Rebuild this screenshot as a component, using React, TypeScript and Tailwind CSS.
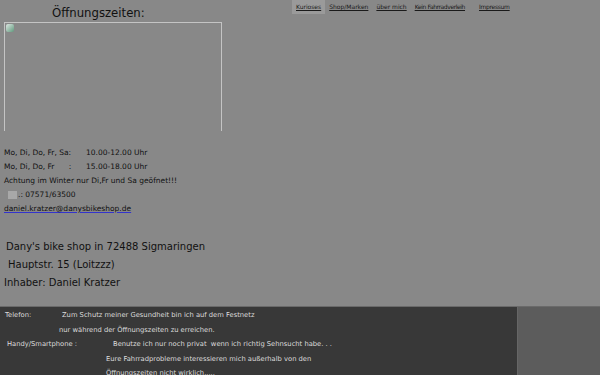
const navItems = ["Kurioses", "Shop/Marken", "über mich", "Kein Fahrradverleih", "Impressum"];

export default function App() {
  return (
    <div className="w-[600px] h-[375px] overflow-hidden bg-[#888888] text-[#111] font-['DejaVu_Sans',sans-serif] flex flex-col">
      <div className="flex h-[22px] shrink-0">
        <div className="w-[292px] pl-[52px] pt-[6px] text-[11.7px] leading-[14px]">Öffnungszeiten:</div>
        <div className="flex items-start text-[6px] leading-[14px] h-[14px]">
          {navItems.map((n, i) => (
            <a
              key={n}
              href="#"
              className={`underline px-[4px] text-[#1a1a1a] ${i === 0 ? "bg-[#9a9a9a]" : ""} ${i === 3 ? "mr-[6px] tracking-[-0.4px]" : ""} ${i === 4 ? "tracking-[-0.3px]" : ""}`}
            >
              {n}
            </a>
          ))}
        </div>
      </div>

      <div className="shrink-0 ml-[4px] w-[218px] h-[109px] border-t border-l border-r border-[#c4c4c4] relative">
        <div className="absolute left-[1px] top-[1px] w-[8px] h-[8px] rounded-[2px] bg-gradient-to-br from-[#dfe8e4] to-[#5e9a7e]" />
      </div>

      <div className="shrink-0 mt-[15px] pl-[4px] text-[7.5px] leading-[14px]">
        <div className="flex">
          <span className="w-[82px]">Mo, Di, Do, Fr, Sa:</span>
          <span>10.00-12.00 Uhr</span>
        </div>
        <div className="flex">
          <span className="w-[82px] whitespace-pre">Mo, Di, Do, Fr      :</span>
          <span>15.00-18.00 Uhr</span>
        </div>
        <div>Achtung im Winter nur Di,Fr und Sa geöfnet!!!</div>
        <div className="flex items-center">
          <span className="ml-[4px] w-[9px] h-[8px] bg-[#a8a8a8] mr-[1px]" />
          <span>.: 07571/63500</span>
        </div>
        <div>
          <a href="#" className="underline decoration-[#3333cc]">daniel.kratzer@danysbikeshop.de</a>
        </div>
      </div>

      <div className="shrink-0 mt-[22px] text-[10px] leading-[18px]">
        <div className="pl-[6px]">Dany's bike shop in 72488 Sigmaringen</div>
        <div className="pl-[8px]">Hauptstr. 15 (Loitzzz)</div>
        <div className="pl-[4px]">Inhaber: Daniel Kratzer</div>
      </div>

      <div className="shrink-0 mt-[14px] flex flex-1 border-t border-[#6a6a6a]">
        <div className="w-[517px] bg-[#383838] text-[#dcdcdc] text-[6.75px] leading-[14.5px] pt-[1px]">
          <div className="flex">
            <span className="pl-[5px] w-[62px]">Telefon:</span>
            <span>Zum Schutz meiner Gesundheit bin ich auf dem Festnetz</span>
          </div>
          <div className="pl-[59px]">nur während der Öffnungszeiten zu erreichen.</div>
          <div className="flex">
            <span className="pl-[7px] w-[113px]">Handy/Smartphone :</span>
            <span className="whitespace-pre">Benutze ich nur noch privat  wenn ich richtig Sehnsucht habe. . .</span>
          </div>
          <div className="pl-[106px]">Eure Fahrradprobleme interessieren mich außerhalb von den</div>
          <div className="pl-[106px]">Öffnungszeiten nicht wirklich.....</div>
        </div>
        <div className="flex-1 bg-[#5c5c5c] border-l border-[#666]" />
      </div>
    </div>
  );
}
